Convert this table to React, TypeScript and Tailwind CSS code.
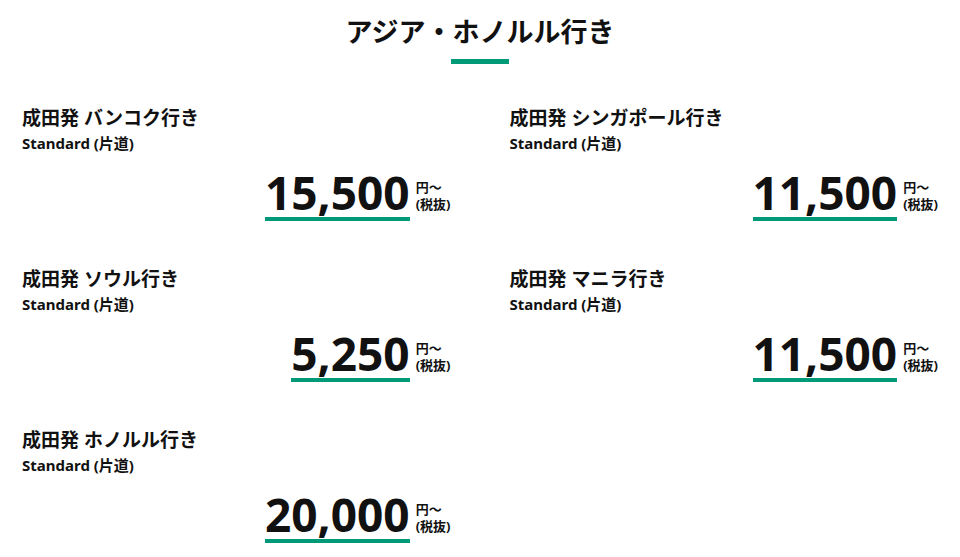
import React from 'react'

type Route = {
  dest: string
  price: string
}

const routes: Route[] = [
  { dest: '成田発 バンコク行き', price: '15,500' },
  { dest: '成田発 シンガポール行き', price: '11,500' },
  { dest: '成田発 ソウル行き', price: '5,250' },
  { dest: '成田発 マニラ行き', price: '11,500' },
  { dest: '成田発 ホノルル行き', price: '20,000' },
]

function RouteCard({ dest, price }: Route) {
  return (
    <div className="flex flex-col">
      <h3 className="text-[19px] leading-[28px] font-bold">{dest}</h3>
      <p className="mt-px text-[15px] leading-[20px] font-bold">Standard (片道)</p>
      {/* price */}
      <div className="mt-[15px] flex items-start justify-end">
        <span className="border-b-4 border-[#009a78] text-[46px] leading-[49px] font-bold">
          {price}
        </span>
        <span className="mt-[11px] ml-[6px] flex flex-col text-[13px] leading-[17px] font-bold">
          <span>円～</span>
          <span>(税抜)</span>
        </span>
      </div>
    </div>
  )
}

export default function App() {
  return (
    <main
      className="w-full bg-white text-[#111]"
      style={{ fontFamily: '"Noto Sans", "Noto Sans CJK JP", sans-serif' }}
    >
      {/* heading */}
      <div className="flex flex-col items-center pt-[14px]">
        <h2 className="text-[27px] leading-[36px] font-bold">アジア・ホノルル行き</h2>
        <div className="mt-[9px] h-[5px] w-[58px] bg-[#009a78]" />
      </div>
      <section className="mt-[40px] grid grid-cols-2 gap-x-[59px] gap-y-[44px] px-[22px]">
        {routes.map((r) => (
          <RouteCard key={r.dest} {...r} />
        ))}
      </section>
    </main>
  )
}
